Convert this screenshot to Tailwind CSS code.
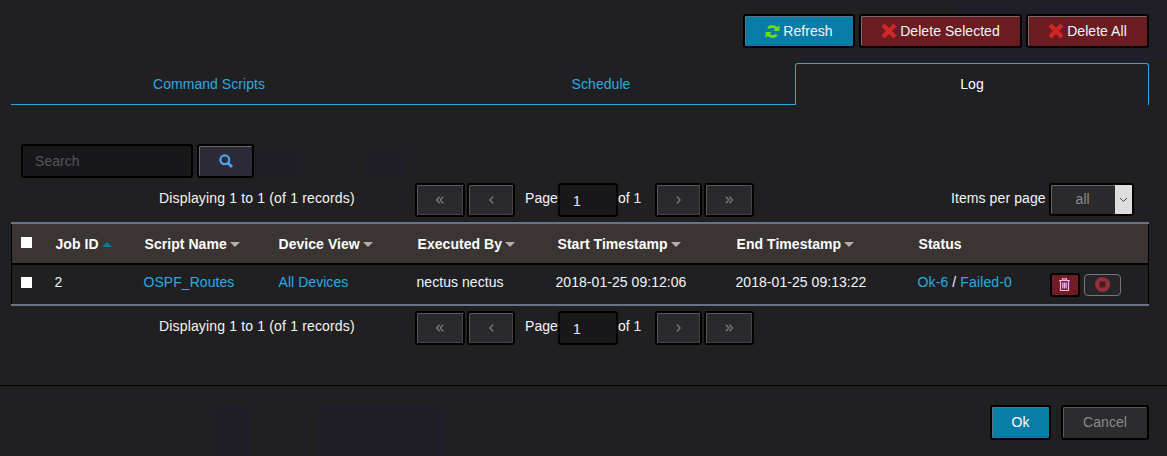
<!DOCTYPE html>
<html lang="en">
<head>
  <meta charset="UTF-8">
  <title>Log</title>
  <script src="https://cdn.jsdelivr.net/npm/@tailwindcss/browser@4"></script>
</head>
<body class="bg-[#202022] h-[456px] w-[1167px] overflow-hidden relative font-['Liberation_Sans',Arial,sans-serif] text-[14px] tracking-[0.05px] text-[#f2f6fa]">
  <!-- faint background blotches -->
  <div class="absolute left-[955px] top-0 w-[212px] h-[60px] bg-[#201e27]"></div>
  <div class="absolute left-[255px] top-[152px] w-[48px] h-[24px] bg-[#1f1e27]"></div>
  <div class="absolute left-[365px] top-[152px] w-[40px] h-[24px] bg-[#1f1e27]"></div>
  <div class="absolute left-[215px] top-[405px] w-[36px] h-[51px] bg-[#1f1e27]"></div>
  <div class="absolute left-[317px] top-[405px] w-[128px] h-[51px] bg-[#1f1e27]"></div>

  <div class="relative">
    <!-- Top buttons -->
    <div class="flex justify-end pt-[14px] pr-[18px] gap-[4px] h-[63px]">
      <button class="h-[34px] w-[112px] flex items-center justify-center gap-[3px] rounded-[3px] bg-[#087ba6] border-2 border-black shadow-[inset_1px_1px_0_#5b7380]">
        <svg class="w-[15px] h-[15px]" viewBox="0 0 16 16" fill="none" stroke="#6fdc1e" stroke-width="3">
          <path d="M13 6.4A5.6 5.6 0 0 0 3.4 4.6"/><path d="M3 9.6a5.6 5.6 0 0 0 9.6 1.8"/>
          <path d="M15.4 1v6.4H9z" fill="#6fdc1e" stroke="none"/><path d="M.6 15V8.6H7z" fill="#6fdc1e" stroke="none"/>
        </svg>
        <span>Refresh</span>
      </button>
      <button class="h-[34px] w-[163px] flex items-center justify-center gap-[3px] rounded-[3px] bg-[#6a1c20] border-2 border-black shadow-[inset_1px_1px_0_#7a6a6a]">
        <svg class="w-[16px] h-[16px]" viewBox="0 0 16 16" fill="none" stroke="#cf2626" stroke-width="4.4"><path d="M2 2l12 12M14 2L2 14"/></svg>
        <span>Delete Selected</span>
      </button>
      <button class="h-[34px] w-[123px] flex items-center justify-center gap-[3px] rounded-[3px] bg-[#6a1c20] border-2 border-black shadow-[inset_1px_1px_0_#7a6a6a]">
        <svg class="w-[16px] h-[16px]" viewBox="0 0 16 16" fill="none" stroke="#cf2626" stroke-width="4.4"><path d="M2 2l12 12M14 2L2 14"/></svg>
        <span>Delete All</span>
      </button>
    </div>

    <!-- Tabs -->
    <div class="flex ml-[11px] w-[1138px] h-[42px]">
      <div class="w-[394px] pt-[2px] pl-[2px] border-b border-[#29abe2] flex items-center justify-center text-[#29abe2]">Command Scripts</div>
      <div class="w-[390px] pt-[2px] pl-[2px] border-b border-[#29abe2] flex items-center justify-center text-[#29abe2]">Schedule</div>
      <div class="w-[354px] border border-b-0 border-[#29abe2] rounded-t-[3px] flex items-center justify-center text-white">Log</div>
    </div>

    <!-- Search -->
    <div class="flex ml-[21px] mt-[39px] gap-[4px] h-[34px]">
      <input placeholder="Search" class="w-[172px] h-[34px] pl-[12px] rounded-[3px] bg-[#18181a] border-2 border-black placeholder-[#55565a] outline-none">
      <button class="w-[57px] h-[34px] flex items-center justify-center rounded-[3px] bg-[#2b2a36] border-2 border-black shadow-[inset_1px_1px_0_#66666e]">
        <svg class="w-[14px] h-[14px]" viewBox="0 0 14 14" fill="none" stroke="#4da6ea" stroke-width="2.2"><circle cx="5.8" cy="5.8" r="4.4"/><path d="M9 9l4 4" stroke-width="2.8"/></svg>
      </button>
    </div>

    <!-- Top pager -->
    <div class="relative flex items-center h-[34px] mt-[5px]">
      <span class="ml-[159px] w-[256px] mb-[4px] tracking-[0.16px]">Displaying 1 to 1 (of 1 records)</span>
      <div class="flex items-center">
        <button class="w-[50px] h-[34px] flex items-center justify-center rounded-[3px] bg-[#2a2a2c] border-2 border-black shadow-[inset_1px_1px_0_#58585c,inset_-1px_-1px_0_#444448]">
          <svg class="w-[8px] h-[8px]" viewBox="0 0 10 9" fill="none" stroke="#7c7c82" stroke-width="1.6"><path d="M4.5.5l-4 4 4 4M9 .5l-4 4 4 4"/></svg>
        </button>
        <button class="ml-[2px] w-[48px] h-[34px] flex items-center justify-center rounded-[3px] bg-[#2a2a2c] border-2 border-black shadow-[inset_1px_1px_0_#58585c,inset_-1px_-1px_0_#444448]">
          <svg class="w-[5px] h-[8px]" viewBox="0 0 6 9" fill="none" stroke="#7c7c82" stroke-width="1.6"><path d="M5 .5l-4 4 4 4"/></svg>
        </button>
        <span class="ml-[10px] mb-[3px]">Page</span>
        <input value="1" class="w-[60px] h-[34px] pl-[13px] pt-[1px] rounded-[3px] bg-[#18181a] border-2 border-black outline-none">
        <span class="w-[37px] mb-[3px]">of 1</span>
        <button class="w-[47px] h-[34px] flex items-center justify-center rounded-[3px] bg-[#2a2a2c] border-2 border-black shadow-[inset_1px_1px_0_#58585c,inset_-1px_-1px_0_#444448]">
          <svg class="w-[5px] h-[8px]" viewBox="0 0 6 9" fill="none" stroke="#7c7c82" stroke-width="1.6"><path d="M1 .5l4 4-4 4"/></svg>
        </button>
        <button class="ml-[2px] w-[50px] h-[34px] flex items-center justify-center rounded-[3px] bg-[#2a2a2c] border-2 border-black shadow-[inset_1px_1px_0_#58585c,inset_-1px_-1px_0_#444448]">
          <svg class="w-[8px] h-[8px]" viewBox="0 0 10 9" fill="none" stroke="#7c7c82" stroke-width="1.6"><path d="M1 .5l4 4-4 4M5.5 .5l4 4-4 4"/></svg>
        </button>
      </div>
      <span class="ml-[197px] mb-[3px] tracking-[0.1px]">Items per page</span>
      <div class="ml-[3px] mb-[1px] flex w-[85px] h-[33px] rounded-[3px] border-2 border-black bg-[#2a2a2c] shadow-[inset_1px_1px_0_#66666a] overflow-hidden">
        <span class="flex-1 flex items-center justify-center text-[#8a8a8f]">all</span>
        <span class="w-[17px] bg-[#dedede] flex items-center justify-center">
          <svg class="w-[9px] h-[6px]" viewBox="0 0 9 6" fill="none" stroke="#444" stroke-width="1"><path d="M1 1l3.5 3.5L8 1"/></svg>
        </span>
      </div>
    </div>

    <!-- Table -->
    <table class="table-fixed ml-[11px] mt-[5px] w-[1138px] border-collapse">
      <colgroup>
        <col class="w-[34px]"><col class="w-[88px]"><col class="w-[135px]"><col class="w-[139px]"><col class="w-[140px]"><col class="w-[179px]"><col class="w-[182px]"><col>
      </colgroup>
      <thead>
        <tr class="h-[41px] bg-[#3a3433] border-t-2 border-t-[#6d7186] border-b-2 border-b-black border-x border-x-black font-bold text-white text-left">
          <th class="pl-[9px] font-bold"><span class="block w-[11px] h-[11px] mb-[2px] bg-white"></span></th>
          <th class="pl-[10px] pt-[1px] font-bold">Job ID<span class="inline-block ml-[3px] align-middle border-x-[5px] border-x-transparent border-b-[5px] border-b-[#087ba6]"></span></th>
          <th class="pl-[11px] pt-[1px] font-bold">Script Name<span class="inline-block ml-[3px] align-middle border-x-[5px] border-x-transparent border-t-[5px] border-t-[#b0b0b0]"></span></th>
          <th class="pl-[10px] pt-[1px] font-bold">Device View<span class="inline-block ml-[3px] align-middle border-x-[5px] border-x-transparent border-t-[5px] border-t-[#b0b0b0]"></span></th>
          <th class="pl-[10px] pt-[1px] font-bold">Executed By<span class="inline-block ml-[3px] align-middle border-x-[5px] border-x-transparent border-t-[5px] border-t-[#b0b0b0]"></span></th>
          <th class="pl-[10px] pt-[1px] font-bold">Start Timestamp<span class="inline-block ml-[3px] align-middle border-x-[5px] border-x-transparent border-t-[5px] border-t-[#b0b0b0]"></span></th>
          <th class="pl-[10px] pt-[1px] font-bold">End Timestamp<span class="inline-block ml-[3px] align-middle border-x-[5px] border-x-transparent border-t-[5px] border-t-[#b0b0b0]"></span></th>
          <th class="pl-[10px] pt-[1px] font-bold">Status</th>
        </tr>
      </thead>
      <tbody>
        <tr class="h-[41px] border-b-2 border-b-[#6d7186] border-x border-x-black">
          <td class="pl-[9px] pb-[4px]"><span class="block w-[11px] h-[11px] bg-white"></span></td>
          <td class="pl-[9px] pb-[4px]">2</td>
          <td class="pl-[10px] pb-[4px] text-[#29abe2]">OSPF_Routes</td>
          <td class="pl-[10px] pb-[4px] text-[#29abe2]">All Devices</td>
          <td class="pl-[9px] pb-[4px]">nectus nectus</td>
          <td class="pl-[8px] pb-[4px]">2018-01-25 09:12:06</td>
          <td class="pl-[9px] pb-[4px]">2018-01-25 09:13:22</td>
          <td class="pl-[9px]">
            <div class="flex items-center">
              <span class="w-[132px] mb-[4px] tracking-[0.12px]"><span class="text-[#29abe2]">Ok-6</span> / <span class="text-[#29abe2]">Failed-0</span></span>
              <button class="w-[30px] h-[24px] flex items-center justify-center rounded-[3px] bg-[#6f1c22] border-2 border-black">
                <svg class="w-[11px] h-[13px]" viewBox="0 0 11 13" fill="none" stroke="#f4b8f0" stroke-width="1.2"><path d="M0 2.5h11M3.5 2.5V.8h4v1.7M1.5 2.5v10h8v-10M3.8 4.5v6M5.5 4.5v6M7.2 4.5v6"/></svg>
              </button>
              <button class="ml-[4px] w-[37px] h-[22px] flex items-center justify-center rounded-[4px] bg-[#262628] border border-[#77777a]">
                <svg class="w-[15px] h-[15px]" viewBox="0 0 15 15"><circle cx="7.5" cy="7.5" r="7.5" fill="#93303a"/><rect x="4.5" y="4.5" width="6" height="6" fill="#4a1a22"/></svg>
              </button>
            </div>
          </td>
        </tr>
      </tbody>
    </table>

    <!-- Bottom pager -->
    <div class="relative flex items-center h-[34px] mt-[5px]">
      <span class="ml-[159px] w-[256px] mb-[4px] tracking-[0.16px]">Displaying 1 to 1 (of 1 records)</span>
      <div class="flex items-center">
        <button class="w-[50px] h-[34px] flex items-center justify-center rounded-[3px] bg-[#2a2a2c] border-2 border-black shadow-[inset_1px_1px_0_#58585c,inset_-1px_-1px_0_#444448]">
          <svg class="w-[8px] h-[8px]" viewBox="0 0 10 9" fill="none" stroke="#7c7c82" stroke-width="1.6"><path d="M4.5.5l-4 4 4 4M9 .5l-4 4 4 4"/></svg>
        </button>
        <button class="ml-[2px] w-[48px] h-[34px] flex items-center justify-center rounded-[3px] bg-[#2a2a2c] border-2 border-black shadow-[inset_1px_1px_0_#58585c,inset_-1px_-1px_0_#444448]">
          <svg class="w-[5px] h-[8px]" viewBox="0 0 6 9" fill="none" stroke="#7c7c82" stroke-width="1.6"><path d="M5 .5l-4 4 4 4"/></svg>
        </button>
        <span class="ml-[10px] mb-[3px]">Page</span>
        <input value="1" class="w-[60px] h-[34px] pl-[13px] pt-[1px] rounded-[3px] bg-[#18181a] border-2 border-black outline-none">
        <span class="w-[37px] mb-[3px]">of 1</span>
        <button class="w-[47px] h-[34px] flex items-center justify-center rounded-[3px] bg-[#2a2a2c] border-2 border-black shadow-[inset_1px_1px_0_#58585c,inset_-1px_-1px_0_#444448]">
          <svg class="w-[5px] h-[8px]" viewBox="0 0 6 9" fill="none" stroke="#7c7c82" stroke-width="1.6"><path d="M1 .5l4 4-4 4"/></svg>
        </button>
        <button class="ml-[2px] w-[50px] h-[34px] flex items-center justify-center rounded-[3px] bg-[#2a2a2c] border-2 border-black shadow-[inset_1px_1px_0_#58585c,inset_-1px_-1px_0_#444448]">
          <svg class="w-[8px] h-[8px]" viewBox="0 0 10 9" fill="none" stroke="#7c7c82" stroke-width="1.6"><path d="M1 .5l4 4-4 4M5.5 .5l4 4-4 4"/></svg>
        </button>
      </div>
    </div>

    <!-- Footer -->
    <div class="mt-[40px] border-t border-black h-[71px] pt-[19px] pr-[18px] flex justify-end">
      <button class="w-[61px] h-[35px] rounded-[3px] bg-[#087ba6] border-2 border-black shadow-[inset_1px_1px_0_#5b7380] text-white">Ok</button>
      <button class="ml-[10px] w-[88px] h-[35px] rounded-[3px] bg-[#2c2c2e] border-2 border-black shadow-[inset_1px_1px_0_#58585c] text-[#8a8a8f]">Cancel</button>
    </div>
  </div>
</body>
</html>
